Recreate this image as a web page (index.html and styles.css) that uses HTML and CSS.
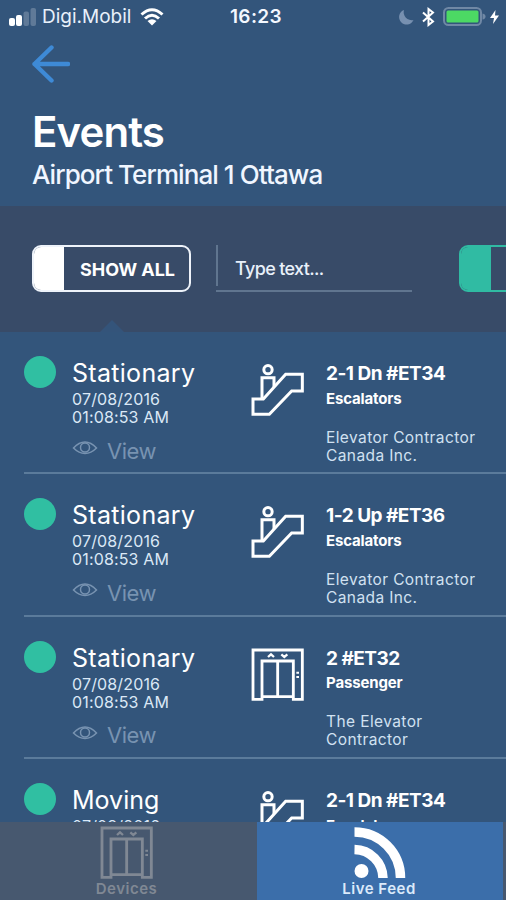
FILE: index.html
```html
<!DOCTYPE html>
<html lang="en">
<head>
<meta charset="utf-8">
<title>Events</title>
<link rel="stylesheet" href="styles.css">
</head>
<body>
<svg class="defs" aria-hidden="true">
  <symbol id="escalator" viewBox="0 0 159 159">
    <g fill="none" stroke="currentColor" stroke-width="9">
      <circle cx="51" cy="20" r="12.500"/>
      <path d="M33 108V44H69V72"/>
      <path d="M6 108H37L104 34H154V84H122L55 154H6Z"/>
    </g>
  </symbol>
  <symbol id="elevator" viewBox="0 0 159 159">
    <g fill="none" stroke="currentColor" stroke-width="8.500">
      <path d="M6 6H154V154H127V39H33V154H6ZM33 146H127M80 39V146"/>
      <path stroke-width="7" d="M51 27L60 19L69 27M91 19L100 27L109 19"/>
      <path stroke-width="6" d="M136 74H144M136 87H144"/>
    </g>
  </symbol>
  <symbol id="eye" viewBox="0 0 26 16">
    <g fill="none" stroke="currentColor" stroke-width="1.500">
      <path d="M1.500 8Q7 2 13 2T24.500 8Q19 13.500 13 13.500T1.500 8Z"/>
      <circle cx="13" cy="7.500" r="4.500"/>
    </g>
  </symbol>
</svg>
<div class="screen">
  <header class="header">
    <div class="status">
      <div class="status-left">
        <svg class="signal" viewBox="0 0 28 18"><g fill="#fff"><rect x="0" y="10" width="6" height="8" rx="2"/><rect x="7" y="7" width="6" height="11" rx="2"/><g opacity=".22"><rect x="14.500" y="3.500" width="5.500" height="14.500" rx="2"/><rect x="21.500" y="0" width="5.500" height="18" rx="2"/></g></g></svg>
        <span class="carrier">Digi.Mobil</span>
        <svg class="wifi" viewBox="0 0 24 18"><g fill="none" stroke="#fff" stroke-width="3"><path d="M1.500 6.500Q12-3 22.500 6.500"/><path d="M5 10.500Q12 4 19 10.500"/></g><path fill="#fff" d="M7.500 13Q12 9.500 16.500 13L12 17.500Z"/></svg>
      </div>
      <span class="clock">16:23</span>
      <div class="status-right">
        <svg class="moon" viewBox="0 0 15 16"><path fill="#7790b0" d="M5 1A7.500 7.500 0 1 0 14.500 11A8 8 0 0 1 5 1Z"/></svg>
        <svg class="bluetooth" viewBox="0 0 13 20"><path fill="none" stroke="#fff" stroke-width="2" d="M1 5.500L11 14.500L6.500 18V2L11 5.500L1 14.500"/></svg>
        <svg class="battery" viewBox="0 0 43 19"><rect x="1" y="1" width="37" height="17" rx="4.500" fill="none" stroke="#7088a5" stroke-width="2"/><rect x="3.500" y="3.500" width="32" height="12" rx="1.500" fill="#4cd964"/><path fill="#7088a5" d="M39.500 6.500Q42.500 7 42.500 9.500T39.500 12.500Z"/></svg>
        <svg class="bolt" viewBox="0 0 9 14"><path fill="#fff" d="M5.500 0L0 8H4L3 14L9 5.500H5Z"/></svg>
      </div>
    </div>
    <svg class="back" viewBox="0 0 38 38"><path fill="none" stroke="#3e8ad6" stroke-width="4.400" stroke-linecap="round" stroke-linejoin="round" d="M19.500 2.500L2.500 19L19.500 35.500M2.500 19H36"/></svg>
    <h1 class="title">Events</h1>
    <p class="subtitle">Airport Terminal 1 Ottawa</p>
  </header>

  <section class="filters">
    <div class="toggle"><span class="knob"></span><span class="toggle-label">SHOW ALL</span></div>
    <div class="search"><span class="search-text">Type text...</span></div>
    <div class="toggle toggle-green"><span class="knob"></span></div>
    <span class="pointer"></span>
  </section>

  <main class="list">
    <article class="event">
      <span class="dot"></span>
      <div class="info">
        <h2 class="state">Stationary</h2>
        <p class="time">07/08/2016<br>01:08:53 AM</p>
        <div class="view"><svg class="eye"><use href="#eye"/></svg><span>View</span></div>
      </div>
      <svg class="device"><use href="#escalator"/></svg>
      <div class="detail">
        <h3 class="name">2-1 Dn #ET34</h3>
        <p class="kind">Escalators</p>
        <p class="company">Elevator Contractor<br>Canada Inc.</p>
      </div>
    </article>
    <article class="event">
      <span class="dot"></span>
      <div class="info">
        <h2 class="state">Stationary</h2>
        <p class="time">07/08/2016<br>01:08:53 AM</p>
        <div class="view"><svg class="eye"><use href="#eye"/></svg><span>View</span></div>
      </div>
      <svg class="device"><use href="#escalator"/></svg>
      <div class="detail">
        <h3 class="name">1-2 Up #ET36</h3>
        <p class="kind">Escalators</p>
        <p class="company">Elevator Contractor<br>Canada Inc.</p>
      </div>
    </article>
    <article class="event">
      <span class="dot"></span>
      <div class="info">
        <h2 class="state">Stationary</h2>
        <p class="time">07/08/2016<br>01:08:53 AM</p>
        <div class="view"><svg class="eye"><use href="#eye"/></svg><span>View</span></div>
      </div>
      <svg class="device"><use href="#elevator"/></svg>
      <div class="detail">
        <h3 class="name">2 #ET32</h3>
        <p class="kind">Passenger</p>
        <p class="company">The Elevator<br>Contractor</p>
      </div>
    </article>
    <article class="event">
      <span class="dot"></span>
      <div class="info">
        <h2 class="state moving">Moving</h2>
        <p class="time">07/08/2016</p>
      </div>
      <svg class="device"><use href="#escalator"/></svg>
      <div class="detail">
        <h3 class="name">2-1 Dn #ET34</h3>
        <p class="kind">Escalators</p>
      </div>
    </article>
  </main>

  <nav class="tabs">
    <div class="tab"><svg class="tab-icon"><use href="#elevator"/></svg><span>Devices</span></div>
    <div class="tab tab-active">
      <svg class="tab-icon" viewBox="0 0 53 53"><circle cx="8.500" cy="45" r="7" fill="#fff"/><g fill="none" stroke="#fff" stroke-width="9.500"><path d="M1.500 23.500A29 29 0 0 1 30 52"/><path d="M1.500 6A46 46 0 0 1 47.500 52"/></g></svg>
      <span>Live Feed</span>
    </div>
  </nav>
</div>
</body>
</html>
```
FILE: styles.css
```css
* { box-sizing: border-box; margin: 0; padding: 0; }
body { width: 506px; height: 900px; overflow: hidden; background: #33557b; color: #fff; font-family: Inter, "Liberation Sans", sans-serif; }
svg { display: block; flex: none; }
span, h1, h2, h3, p { white-space: nowrap; }
.defs { position: absolute; width: 0; height: 0; }
.screen { display: flex; flex-direction: column; width: 506px; height: 900px; overflow: hidden; }

.header { height: 206px; flex: none; }
.status { display: grid; grid-template-columns: 1fr auto 1fr; align-items: center; height: 33px; padding: 0 7px 0 9px; }
.status-left, .status-right { display: flex; align-items: center; }
.status-right { justify-content: flex-end; }
.signal { width: 28px; height: 18px; margin-right: 5px; }
.carrier { font-size: 19px; line-height: 24px; color: #e8f0fa; }
.wifi { width: 24px; height: 18px; margin-left: 9px; }
.clock { padding-left: 4px; font-size: 19px; font-weight: 600; line-height: 24px; letter-spacing: 0.4px; color: #f4f8ff; }
.moon { width: 15px; height: 16px; margin-right: 8px; }
.bluetooth { width: 13px; height: 20px; margin-right: 8px; }
.battery { width: 43px; height: 19px; margin-right: 4px; }
.bolt { width: 9px; height: 14px; }
.back { width: 38px; height: 38px; margin: 12px 0 0 32px; }
.title { margin: 24px 0 0 32px; font-size: 42px; font-weight: 600; line-height: 50px; letter-spacing: -0.9px; }
.subtitle { margin: 3px 0 0 32px; font-size: 26px; font-weight: 500; line-height: 30px; letter-spacing: -0.93px; color: #f0f6ff; }

.filters { position: relative; display: flex; align-items: flex-start; flex: none; height: 126px; padding: 39px 0 0 32px; overflow: hidden; background: #384b68; }
.toggle { display: flex; flex: none; width: 159px; height: 47px; border: 2px solid #eef3fa; border-radius: 9px; overflow: hidden; }
.knob { width: 30px; background: #fff; }
.toggle-label { flex: 1; padding-left: 16px; font-size: 18px; font-weight: 700; line-height: 45px; letter-spacing: -0.05px; }
.search { flex: none; width: 196px; height: 47px; margin: 0 47px 0 25px; border-bottom: 2px solid #60758f; }
.search-text { display: block; height: 41px; padding-left: 17px; border-left: 2px solid #60758f; font-size: 18px; font-weight: 500; line-height: 48px; letter-spacing: -0.65px; color: #e8f0fa; }
.toggle-green { border-color: #30bba3; }
.toggle-green .knob { background: #30bba3; }
.pointer { position: absolute; left: 100px; bottom: 0; width: 24px; height: 12px; background: #34547a; clip-path: polygon(50% 0, 100% 100%, 0 100%); }

.list { flex: 1; min-height: 0; padding-left: 24px; overflow: hidden; }
.event { display: grid; grid-template-columns: 48px 179px 75px 1fr; align-items: start; height: 142.4px; border-bottom: 2px solid #5b7b9b; }
.dot { width: 32px; height: 32px; margin-top: 24px; border-radius: 50%; background: #30bfa2; }
.info { padding-top: 26px; }
.state { font-size: 25px; font-weight: 400; line-height: 30px; letter-spacing: 0.3px; }
.moving { letter-spacing: 0; }
.time { margin-top: 2px; font-size: 16px; line-height: 18px; letter-spacing: 0.15px; color: #dbe8f6; }
.view { display: flex; align-items: center; margin-top: 10.500px; font-size: 22px; line-height: 28px; letter-spacing: -0.5px; color: #7893b1; }
.eye { width: 26px; height: 16px; margin: -5px 9px 0 0; }
.device { width: 53px; height: 53px; margin-top: 31px; }
.detail { padding-top: 30px; }
.name { font-size: 19px; font-weight: 700; line-height: 24px; letter-spacing: -0.5px; }
.kind { margin-top: 3.500px; font-size: 15px; font-weight: 700; line-height: 18px; letter-spacing: -0.15px; }
.company { margin-top: 21px; font-size: 15.500px; line-height: 18px; letter-spacing: 0.4px; color: #d1e1f1; }

.tabs { display: flex; flex: none; height: 78px; padding-right: 3px; background: #47586f; }
.tab { display: flex; flex-direction: column; align-items: center; width: 257px; padding: 4px 4px 0 0; color: #808894; font-size: 15px; font-weight: 600; line-height: 20px; letter-spacing: 0.5px; }
.tab-active { width: 246px; padding-right: 2px; background: #3b6eaa; color: #dbeafa; }
.tab-icon { width: 53px; height: 53px; }
```
